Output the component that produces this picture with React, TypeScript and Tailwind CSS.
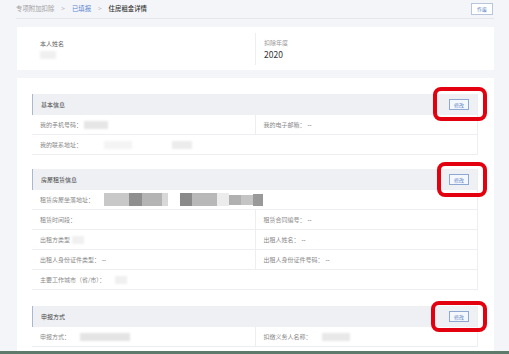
import React from "react";

const Blur = ({ w, c = "#d9d9d9", className = "" }: { w: number; c?: string; className?: string }) => (
  <span className={"inline-block h-[8px] blur-[1px] " + className} style={{ width: w, background: c }} />
);

const Header = ({ title }: { title: string }) => (
  <div className="h-[21px] bg-[#eef0f4] border-l border-[#a9b8cf] flex items-center justify-between pl-2 pr-2">
    <span className="text-[6px] text-[#444]">{title}</span>
    <span className="w-[20px] h-[11px] border border-[#8ea8d4] bg-[#f4f7fc] text-[#5a82c6] text-[5px] flex items-center justify-center leading-none">修改</span>
  </div>
);

const Cell = ({ label, children, full = false, right = false }: { label: string; children?: React.ReactNode; full?: boolean; right?: boolean }) => (
  <div className={"flex items-center pl-2 gap-[2px] " + (full ? "col-span-2 " : "") + (right ? "border-l border-[#eceef2]" : "")}>
    <span className="text-[6px] text-[#8a8a8a]">{label}</span>
    {children}
  </div>
);

const Row = ({ children }: { children: React.ReactNode }) => (
  <div className="grid grid-cols-2 h-[20px] border-b border-[#eceef2]">{children}</div>
);

const Dash = () => <span className="text-[6px] text-[#444]">--</span>;

export default function App() {
  return (
    <div className="w-[509px] h-[354px] overflow-hidden bg-[#f4f5f9] relative flex flex-col font-['Noto_Sans_CJK_SC',sans-serif]">
      <div className="pl-4 pr-[15px] flex-1 flex flex-col">
        <div className="h-[19px] flex items-center justify-between border-b border-[#e4e6ec] shrink-0">
          <div className="flex items-center gap-[7px] text-[6.4px]">
            <span className="text-[#a0a0a0]">专项附加扣除</span>
            <span className="text-[#b0b0b0]">&gt;</span>
            <span className="text-[#5b86cf]">已填报</span>
            <span className="text-[#b0b0b0]">&gt;</span>
            <span className="text-[#333] font-medium">住房租金详情</span>
          </div>
          <span className="w-[22px] h-[12px] border border-[#b8c6dc] bg-white text-[#5a82c6] text-[5px] flex items-center justify-center mr-px">作废</span>
        </div>
        <div className="mt-[8px] h-[43px] bg-white ml-px grid grid-cols-[238px_1fr] shrink-0 items-center">
          <div className="pl-[23px] flex flex-col gap-[3px]">
            <span className="text-[6px] text-[#666]">本人姓名</span>
            <Blur w={16} c="#f0f0f0" />
          </div>
          <div className="border-l border-[#eceef2] h-[32px] pl-2 flex flex-col justify-center gap-[1px]">
            <span className="text-[6px] text-[#999]">扣除年度</span>
            <span className="text-[8.5px] text-[#333] leading-[12px]">2020</span>
          </div>
        </div>
        <div className="mt-[8px] ml-px bg-white flex-1 pl-[15px] pr-[16px] pt-[16px] flex flex-col">
          <div className="border-r border-[#eceef2]">
            <Header title="基本信息" />
            <Row>
              <Cell label="我的手机号码："><Blur w={24} c="#e6e6e6" /></Cell>
              <Cell label="我的电子邮箱：" right><Dash /></Cell>
            </Row>
            <Row>
              <Cell label="我的联系地址：" full>
                <Blur w={28} c="#f4f4f4" className="ml-5" />
                <Blur w={20} c="#ececec" className="ml-[38px]" />
              </Cell>
            </Row>
          </div>
          <div className="border-r border-[#eceef2] mt-[14px]">
            <Header title="房屋租赁信息" />
            <Row>
              <Cell label="租赁房屋坐落地址：" full>
                <span className="flex items-center ml-2 blur-[0.6px]">
                  <span className="inline-block h-[13px] w-[25px] bg-[#c8c8c8]" />
                  <span className="inline-block h-[13px] w-[13px] bg-[#8f8f8f]" />
                  <span className="inline-block h-[13px] w-[20px] bg-[#b4b4b4]" />
                  <span className="inline-block h-[13px] w-[6px] bg-[#d8d8d8]" />
                  <span className="inline-block h-[13px] w-[12px] bg-white" />
                  <span className="inline-block h-[13px] w-[12px] bg-[#8a8a8a]" />
                  <span className="inline-block h-[13px] w-[25px] bg-[#b8b8b8]" />
                  <span className="inline-block h-[13px] w-[12px] bg-[#ececec]" />
                  <span className="inline-block h-[10px] w-[12px] bg-[#b0b0b0]" />
                  <span className="inline-block h-[10px] w-[12px] bg-[#c4c4c4]" />
                  <span className="inline-block h-[12px] w-[10px] bg-[#999]" />
                </span>
              </Cell>
            </Row>
            <Row>
              <Cell label="租赁时间段：" />
              <Cell label="租赁合同编号：" right><Dash /></Cell>
            </Row>
            <Row>
              <Cell label="出租方类型"><Blur w={12} c="#f0f0f0" /></Cell>
              <Cell label="出租人姓名：" right><Dash /></Cell>
            </Row>
            <Row>
              <Cell label="出租人身份证件类型："><Dash /></Cell>
              <Cell label="出租人身份证件号码：" right><Dash /></Cell>
            </Row>
            <Row>
              <Cell label="主要工作城市（省/市）：" full><Blur w={12} c="#f0f0f0" className="ml-2" /></Cell>
            </Row>
          </div>
          <div className="border-r border-[#eceef2] mt-[16px]">
            <Header title="申报方式" />
            <Row>
              <Cell label="申报方式："><Blur w={50} c="#e4e4e4" className="ml-2" /></Cell>
              <Cell label="扣缴义务人名称：" right><Blur w={28} c="#e8e8e8" className="ml-2" /></Cell>
            </Row>
          </div>
        </div>
      </div>
      <div className="h-[3px] bg-[#5e7a6a] shrink-0" />
      <div className="absolute left-[433px] top-[87px] w-[54px] h-[34px] border-4 border-[#e3000f] rounded-[8px]" />
      <div className="absolute left-[437px] top-[162px] w-[50px] h-[35px] border-4 border-[#e3000f] rounded-[8px]" />
      <div className="absolute left-[431px] top-[301px] w-[56px] h-[31px] border-4 border-[#e3000f] rounded-[8px]" />
    </div>
  );
}
